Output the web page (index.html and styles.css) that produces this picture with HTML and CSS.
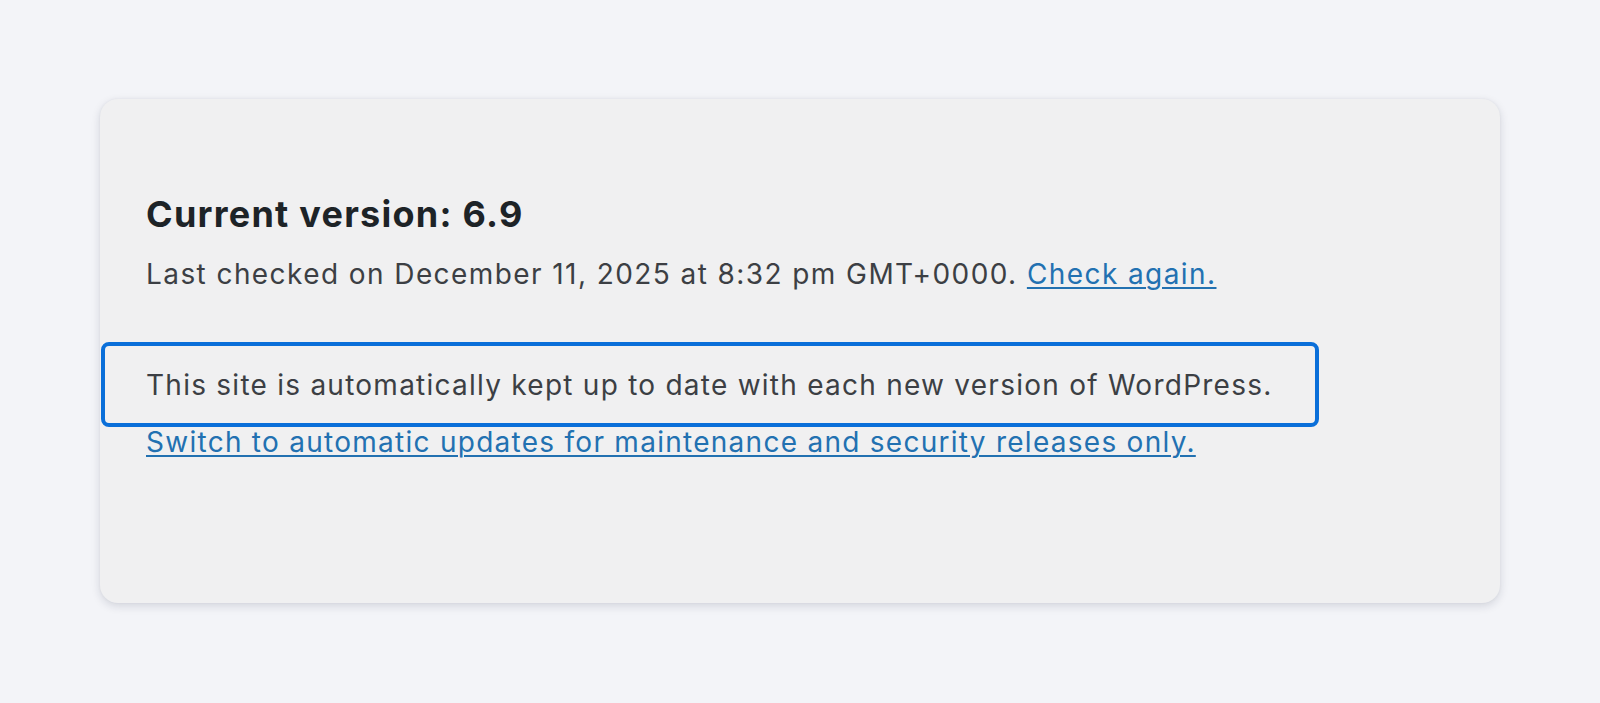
FILE: index.html
```html
<!DOCTYPE html>
<html lang="en">
<head>
<meta charset="utf-8">
<title>Updates</title>
<link rel="stylesheet" href="styles.css">
</head>
<body>
<main class="page">
  <section class="card">
    <h2 class="title">Current version: 6.9</h2>
    <p class="checked">Last checked on December 11, 2025 at 8:32 pm GMT+0000. <a href="#" class="link">Check again.</a></p>
    <div class="highlight">
      <p class="auto">This site is automatically kept up to date with each new version of WordPress.</p>
    </div>
    <p class="switch"><a href="#" class="link">Switch to automatic updates for maintenance and security releases only.</a></p>
  </section>
</main>
</body>
</html>
```

FILE: styles.css
```css
html, body {
  margin: 0;
  padding: 0;
}
body {
  background: #f3f4f8;
  font-family: Inter, "Noto Sans", "Liberation Sans", sans-serif;
  color: #3c3f44;
}
.page {
  padding: 99px 0 0 100px;
  height: 703px;
  box-sizing: border-box;
}
.card {
  width: 1400px;
  height: 504px;
  box-sizing: border-box;
  background: #f0f0f1;
  border-radius: 18px;
  box-shadow: 0 3px 10px rgba(20, 30, 60, 0.14), 0 0 3px rgba(20, 30, 60, 0.05);
  padding: 93px 0 0 0;
}
.title {
  margin: 0 0 0 46px;
  font-size: 36px;
  font-weight: 700;
  letter-spacing: 1.25px;
  color: #1d2327;
  line-height: 44px;
}
.checked {
  margin: 20px 0 0 46px;
  font-size: 28px;
  letter-spacing: 1.42px;
  line-height: 36px;
}
.link {
  color: #2271b1;
  text-decoration: underline;
  text-underline-offset: 3px;
  text-decoration-thickness: 2px;
}
.highlight {
  margin: 50px 0 0 1px;
  width: fit-content;
  border: 4px solid #0a6fd9;
  border-radius: 8px;
  padding: 2px 42px 0 41px;
}
.auto {
  margin: 0;
  font-size: 28px;
  letter-spacing: 1.25px;
  line-height: 75px;
}
.switch {
  margin: 0 0 0 46px;
  font-size: 28px;
  letter-spacing: 1.27px;
  line-height: 30px;
}
```
